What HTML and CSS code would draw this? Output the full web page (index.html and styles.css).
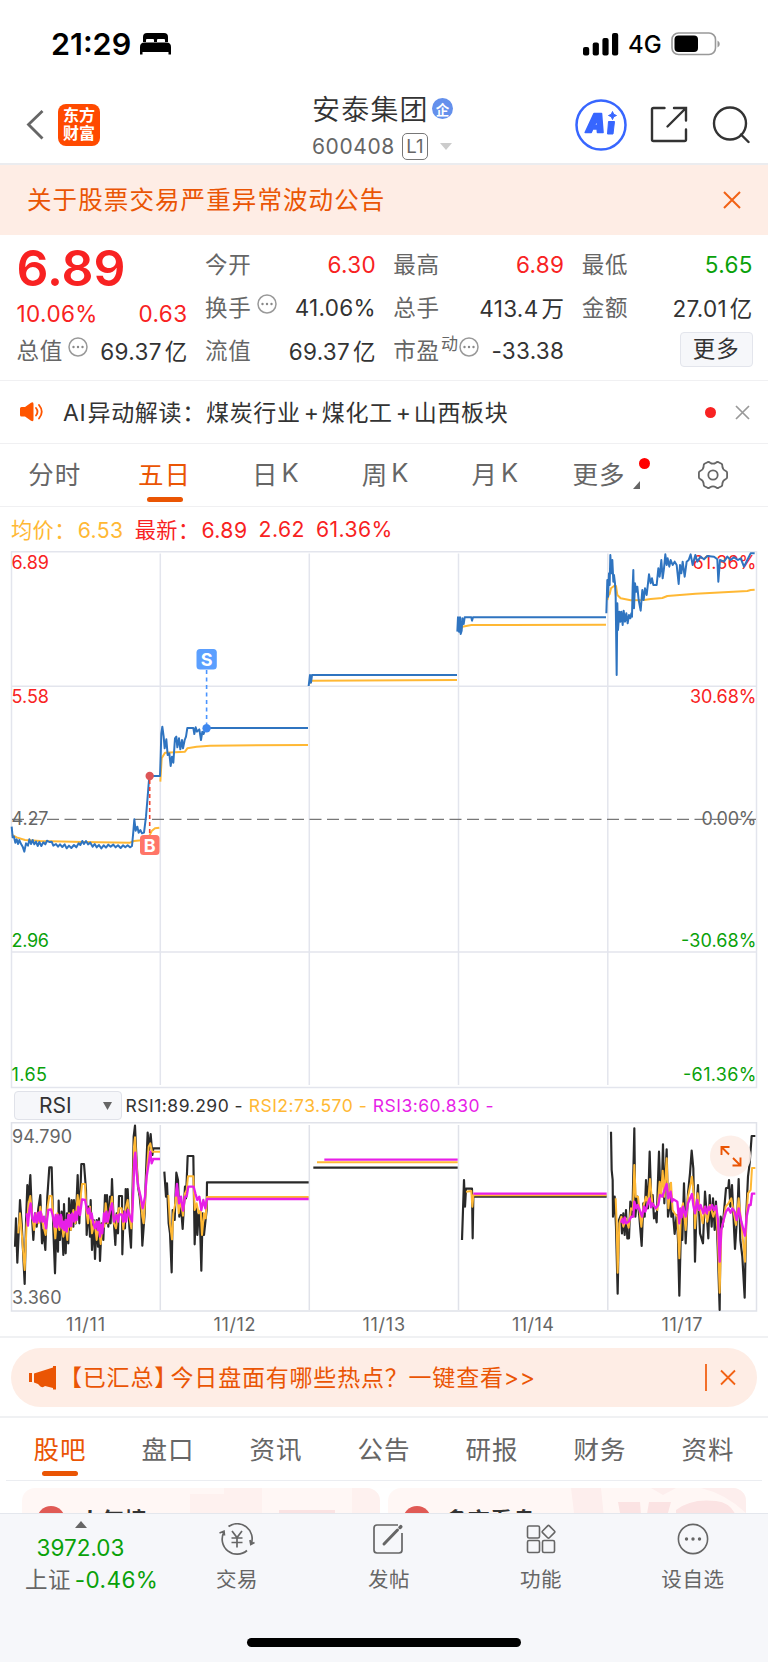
FILE: index.html
```html
<!DOCTYPE html>
<html lang="zh-CN">
<head>
<meta charset="utf-8">
<title>安泰集团 600408</title>
<link rel="stylesheet" href="styles.css">
</head>
<body>
<div class="screen">
  <div class="status">
    <span class="clock">21:29</span>
    <svg class="bed" width="32" height="22" viewBox="0 0 32 22"><path d="M3 9V4q0-4 4-4h17q4 0 4 4v5h-3V7q0-1-1-1h-6q-1 0-1 1v2h-3V7q0-1-1-1H7Q6 6 6 7v2z"/><path d="M0 21.5V14q0-4.500 4.500-4.500h22q4.500 0 4.500 4.500v7.500h-2.500V19h-26v2.500z"/></svg>
    <svg class="signal" width="36" height="23" viewBox="0 0 36 23"><rect x="0" y="14" width="6.200" height="8.500" rx="2"/><rect x="9.700" y="9.500" width="6.200" height="13" rx="2"/><rect x="19.400" y="5" width="6.200" height="17.500" rx="2"/><rect x="29" y="0" width="6.200" height="22.500" rx="2"/></svg>
    <span class="net">4G</span>
    <svg class="battery" width="50" height="24" viewBox="0 0 50 24"><rect x="1" y="1" width="43.500" height="21.500" rx="6.500" fill="none" stroke="#999" stroke-width="1.600"/><rect x="3.500" y="3.500" width="23.500" height="16.500" rx="4"/><path d="M46.500 8.500v7q2.300-1 2.300-3.500t-2.300-3.500z" fill="#999"/></svg>
  </div>

  <header class="header">
    <div class="brand">
      <svg width="19" height="32" viewBox="0 0 19 32"><path d="M16.500 2 2.500 15.500 16.500 29.500" fill="none" stroke="#666" stroke-width="2.800"/></svg>
      <div class="logo"><span>东方</span><span>财富</span></div>
    </div>
    <div class="title">
      <div class="name">安泰集团<span class="corp">企</span></div>
      <div class="code"><span>600408</span><span class="level">L1</span><svg width="12" height="7" viewBox="0 0 12 7"><path d="M0 0h12L6 7z" fill="#ccc"/></svg></div>
    </div>
    <div class="actions">
      <svg width="52" height="52" viewBox="0 0 52 52"><circle cx="26" cy="26" r="24.500" fill="none" stroke="#3766ff" stroke-width="2.500"/><path d="M19 14.500h7.500l1.500 19h-5.500l-.3-3.500h-4.500l-1.500 3.500h-6zM22 20.500l-2.500 6h3z" fill="#3766ff" fill-rule="evenodd" stroke="#3766ff" stroke-width="1.600" stroke-linejoin="round"/><path d="M33.500 22.500h6l-1.500 12.500h-5.500zM37.500 12.500l1.200 2.800 2.800 1.200-2.800 1.200-1.200 2.800-1.200-2.800-2.800-1.200 2.800-1.200z" fill="#3766ff" stroke="#3766ff" stroke-linejoin="round"/></svg>
      <svg width="38" height="38" viewBox="0 0 38 38" fill="none" stroke="#333" stroke-width="2.400" stroke-linecap="round"><path d="M14.500 2H3.500Q2 2 2 3.500v30Q2 35 3.500 35h31q1.500 0 1.500-1.500V23.500M24 2h12v12.500M36 2 17.500 20.500"/></svg>
      <svg width="38" height="38" viewBox="0 0 38 38" fill="none" stroke="#333" stroke-width="2.400" stroke-linecap="round"><circle cx="18" cy="17.500" r="16"/><path d="m29 28.500 7.500 7.500"/></svg>
    </div>
  </header>

  <div class="notice">
    <span>关于股票交易严重异常波动公告</span>
    <svg width="18" height="18" viewBox="0 0 18 18"><path d="m1 1 16 16M17 1 1 17" stroke="#f26215" stroke-width="2"/></svg>
  </div>

  <section class="quote">
    <div class="col first">
      <div class="price">6.89</div>
      <div class="row change red"><span>10.06%</span><span>0.63</span></div>
      <div class="row"><label>总值</label><svg class="info" viewBox="0 0 20 20"><use href="#dots"/></svg><b>69.37<i>亿</i></b></div>
    </div>
    <div class="col">
      <div class="row"><label>今开</label><b class="red">6.30</b></div>
      <div class="row"><label>换手</label><svg class="info" viewBox="0 0 20 20"><use href="#dots"/></svg><b>41.06%</b></div>
      <div class="row"><label>流值</label><b>69.37<i>亿</i></b></div>
    </div>
    <div class="col">
      <div class="row"><label>最高</label><b class="red">6.89</b></div>
      <div class="row"><label>总手</label><b>413.4<i>万</i></b></div>
      <div class="row"><label>市盈</label><small>动</small><svg class="info tight" viewBox="0 0 20 20"><g id="dots"><circle cx="10" cy="10" r="9" fill="none" stroke="#999" stroke-width="1.500"/><g fill="#888"><circle cx="5.500" cy="10" r="1.200"/><circle cx="10" cy="10" r="1.200"/><circle cx="14.500" cy="10" r="1.200"/></g></g></svg><b>-33.38</b></div>
    </div>
    <div class="col">
      <div class="row"><label>最低</label><b class="green">5.65</b></div>
      <div class="row"><label>金额</label><b>27.01<i>亿</i></b></div>
      <div class="row end"><span class="more">更多</span></div>
    </div>
  </section>

  <div class="alert">
    <svg width="23" height="20" viewBox="0 0 23 20"><path d="M0 6.500q0-1.500 1.500-1.500H5L11 .8Q13.500-.6 13.500 2v15.500q0 2.600-2.500 1.200L5 14.500H1.500Q0 14.500 0 13z" fill="#ff5500"/><path d="M16 6q3 3.700 0 7.500M19 3q5.500 6.700 0 13.500" fill="none" stroke="#ff5500" stroke-width="1.800" stroke-linecap="round"/></svg>
    <span class="alert-text"><span class="lat">AI</span>异动解读：煤炭行业<span class="plus">+</span>煤化工<span class="plus">+</span>山西板块</span>
    <span class="dot"></span>
    <svg width="15" height="15" viewBox="0 0 15 15"><path d="m1 1 13 13M14 1 1 14" stroke="#999" stroke-width="1.700"/></svg>
  </div>

  <nav class="periods">
    <span>分时</span><span class="on">五日</span><span>日<em>K</em></span><span>周<em>K</em></span><span>月<em>K</em></span>
    <span class="morep">更多<svg width="7" height="8" viewBox="0 0 7 8"><path d="M7 0v8H0z" fill="#666"/></svg><u class="badge"></u></span>
    <span class="gear"><svg width="30" height="28" viewBox="0 0 30 28" fill="none" stroke="#666" stroke-width="1.800" stroke-linejoin="round"><path d="M9.500 1.200Q11 .6 12 1.700q3 2 6 0 1-1.100 2.500-.5l3 1.600q1 .7.8 2.200.2 3.500 3.500 5 1.300.7 1.300 1.700v4.600q0 1-1.300 1.700-3.300 1.500-3.500 5 .2 1.500-.8 2.200l-3 1.600q-1.500.6-2.500-.5-3-2-6 0-1 1.100-2.500.5l-3-1.600q-1-.7-.8-2.200-.2-3.500-3.500-5Q.9 17.300.9 16.300v-4.600q0-1 1.300-1.700 3.300-1.500 3.500-5-.2-1.500.8-2.200z"/><circle cx="15" cy="14" r="4.700"/></svg></span>
  </nav>

  <div class="legend"><span class="gold">均价：<em>6.53</em></span><span class="red">最新：<em>6.89</em></span><span class="red">2.62</span><span class="red">61.36%</span></div>

  <svg class="chart" width="768" height="538" viewBox="0 551 768 538">
    <g stroke="#e3e5ed" stroke-width="1.500" fill="none">
      <path d="M11.500 551.700H756.500V1087.500H11.500z"/>
      <path d="M11.500 686.300H756.500M11.500 952H756.500M160.300 553.500V1085M309.300 553.500V1085M458.500 553.500V1085M607.800 553.500V1085"/>
    </g>
    <path d="M12 819.400H756" stroke="#777" stroke-width="1.200" stroke-dasharray="12 5.500" fill="none"/>
    <g class="axis">
      <text x="11.500" y="569" textLength="37.500" class="r">6.89</text>
      <text x="11.500" y="702.700" textLength="37.500" class="r">5.58</text>
      <text x="11.500" y="825" textLength="37" class="g">4.27</text>
      <text x="11.500" y="946.500" textLength="37.500" class="n">2.96</text>
      <text x="11.500" y="1080.500" textLength="35.500" class="n">1.65</text>
      <text x="692.500" y="569" textLength="64" class="r">61.36%</text>
      <text x="690" y="702.700" textLength="66.500" class="r">30.68%</text>
      <text x="701.500" y="825" textLength="55" class="g">0.00%</text>
      <text x="681" y="946.500" textLength="75.500" class="n">-30.68%</text>
      <text x="683" y="1080.500" textLength="73.500" class="n">-61.36%</text>
    </g>
    <g class="lines" transform="translate(0 640) scale(.33333)">
      <path class="y" d="M36 585 50 592 75 600 120 603 250 606 390 608 402 603 432 600 447 590 455 573 465 565 478 563M481 425 485 355 495 338 555 335 562 325 590 320 630 317 924 315M929 130 935 122 1371 120"/>
      <path class="b" d="M35 560 38 592 42 590 46 608 50 598 54 612 58 600 62 610 68 620 73 635 78 610 84 617 88 598 93 612 98 600 103 613 108 605 113 618 118 606 124 618 130 607 136 613 141 602 148 606 155 605 160 617 168 612 174 620 180 613 187 621 194 613 200 625 207 617 214 624 222 615 229 622 236 610 241 615 247 603 252 612 258 603 264 613 271 608 278 620 284 612 290 622 297 615 304 625 311 616 318 623 325 614 332 620 340 614 347 622 354 616 362 624 369 616 376 622 383 616 390 622 396 618 400 575 403 538 407 572 412 560 416 578 421 570 426 580 432 578 438 530 443 470 447 420 450 408H480L482 350 484 280 487 260 491 290 494 325 499 298 503 345 508 340 512 378 516 350 520 368 525 295 529 290 532 322 537 295 541 328 546 300 549 325 554 300 558 290 562 264H580L583 282 587 262 591 275 598 268 603 300 607 275 611 282 616 264H924M926 138 930 105 933 128 936 105H1371"/>
    </g>
    <g class="lines" transform="translate(384 440) scale(.33333)">
      <path class="y" d="M230 570 235 560 262 555 666 554M670 480 674 465 677 462 681 445 690 438 696 438 700 465 710 475 740 481 780 480 800 477 835 474 850 468 935 461 1090 453 1100 450 1112 449"/>
      <path class="b" d="M220 575 222 532 225 575 228 532 230 582 233 572 235 535 239 552 242 532H262L264 542 267 532H666M667 520 670 420 672 470 675 400 677 435 679 345 682 400 685 360 688 425 690 405 693 430 695 470 698 705 700 490 702 570 706 515 709 545 712 515 716 555 719 512 723 545 727 520 731 550 735 525 739 535 742 520 744 530 746 440 748 390 750 505 753 430 757 455 760 440 764 480 770 512 775 450 779 480 783 445 788 465 792 430 795 403 800 430 804 415 808 435H818L823 385 827 410 832 360 836 415 840 385 844 343 848 375 851 355 856 380 860 360 866 375 872 365 878 375 884 432 888 375 892 400 896 365 902 410 908 365 914 360 920 343 926 375 934 345 940 365 950 350 960 358 970 348 990 350 1000 358 1003 425 1008 360 1020 365 1030 350 1040 360 1050 352 1062 360 1070 355 1080 380 1090 360 1100 340H1112"/>
    </g>
    <path d="M149.700 780V836" stroke="#f4452f" stroke-width="1.600" stroke-dasharray="4 3"/>
    <path d="M206.600 670V724" stroke="#4a94ff" stroke-width="1.600" stroke-dasharray="4 3.500"/>
    <circle cx="149.700" cy="776" r="4.200" fill="#dd5557"/><circle cx="206.600" cy="728.300" r="4.200" fill="#3e87ee"/>
    <rect x="140" y="835" width="19.500" height="20" rx="3.500" fill="#ff7567"/><rect x="196.500" y="649" width="20.300" height="20.500" rx="3.500" fill="#5b9fff"/>
    <text x="149.700" y="851.700" class="mark">B</text><text x="206.600" y="666" class="mark">S</text>
  </svg>

  <div class="rsi-bar">
    <span class="select">RSI<svg width="9" height="8" viewBox="0 0 9 8"><path d="M0 0h9L4.500 8z" fill="#666"/></svg></span>
    <span>RSI1:89.290 -</span><span class="gold">RSI2:73.570 -</span><span class="pink">RSI3:60.830 -</span>
  </div>

  <svg class="chart rsi" width="768" height="214" viewBox="0 1122 768 214">
    <path d="M11.500 1122.700H756.500V1311H11.500zM160.300 1125V1310M309.300 1125V1310M458.500 1125V1310M607.800 1125V1310" stroke="#e0e2e9" stroke-width="1.500" fill="none"/>
    <g class="lines" transform="translate(0 1080) scale(.33333)">
      <path class="k" d="M45 500 48 415 52 548 56 460 60 360 65 430 74 612 78 430 82 315 86 360 91 285 96 410 100 480 105 400 110 440 115 385 121 345 126 490 130 450 136 510 142 350 148 262H155L160 450 165 580 170 410 174 515 176 362 180 480 185 395 190 525 192 372 197 520 201 400 205 490 207 355 212 450 215 360 220 440 222 360 227 430 233 285 238 430 244 252H252L258 330 260 465 265 380 270 470 272 360 276 510 281 420 285 537 290 420 294 500 297 415 300 543 305 430 310 480 315 345 318 430 321 345 325 440 330 350 332 430 336 297 340 400 346 495 350 400 354 460 357 348H366L367 523 371 395 375 445 377 327 381 400 383 327 388 440 393 503 398 320 401 170 405 137 410 250 414 320 419 350 424 400 427 497 434 400 438 280 443 158 447 210 452 162 457 225 460 205H480M493 275 498 350 501 310 506 430 510 460 515 577 518 390 524 420 529 278 534 300 538 410 543 380 548 447 555 320 558 355 563 228H580L584 493 588 380 592 465 596 400 600 430 604 572 608 400 612 465 620 390 621 307H926M940 263H1373"/>
      <path class="y" d="M55 460 60 400 66 470 74 570 80 430 86 370 91 348 97 410 102 450 110 400 116 430 121 380 128 430 137 465 143 380 148 348H155L160 410 166 475 172 400 178 450 184 410 190 470 196 430 202 480 207 400 213 450 220 390 226 430 233 345 238 390 246 312H255L259 390 264 430 270 380 276 460 284 425 290 480 296 430 302 492 308 430 313 440 317 370 323 430 330 390 336 350 342 430 348 445 356 385H365L370 448 376 390 383 360 388 410 394 445 399 330 402 200 405 172 410 260 415 320 421 350 427 410 431 430 437 330 441 270 446 200 451 190 456 215H480M505 345 510 430 516 478 520 400 526 370 531 320 536 400 542 360 549 407 555 340 560 330 564 289H580L584 390 590 370 596 400 602 390 606 465 612 400 617 415 621 351H926M951 247H1373"/>
      <path class="m" d="M80 400 84 437 88 390 92 370 97 415 102 425 106 400 110 428 115 398 119 425 122 395 128 425 132 410 138 445 145 390 153 388 158 405 164 440 167 405 171 442 175 405 180 440 183 405 187 445 190 425 193 450 197 420 200 455 205 405 208 440 211 405 214 438 217 400 223 425 226 395 230 420 235 380 240 405 246 358 255 360 260 385 264 400 268 385 272 415 275 400 280 430 285 445 290 425 294 450 297 425 300 470 303 435 307 460 312 400 316 425 319 395 323 425 328 400 336 370 342 425 350 405 354 425 358 403 365 403 370 425 374 395 378 425 384 390 390 410 396 425 400 330 403 240 406 218 410 280 415 320 422 350 428 385 435 350 440 290 446 250 451 215 455 250 460 237H480M527 350 531 312 537 370 543 350 549 392 555 350 560 350 565 320H581L586 340 592 360 598 350 604 390 610 360 616 385 621 357H926M973 239H1373"/>
    </g>
    <g class="lines" transform="translate(384 1080) scale(.33333)">
      <path class="k" d="M234 480 240 300 243 380 246 326H264L266 475 268 350H668M681 155 683 270 686 300 687 410 692 350 696 440 701 641 705 420 711 405 714 460 718 400 722 465 726 390 730 475H735L739 365 745 410 751 145 754 410 760 350 766 410 773 498 778 370 782 410 786 300 792 385 797 215 802 370 806 345 810 415 814 400 818 427 822 300 825 215 829 330 831 300 834 300 837 193 841 370 844 290 848 208 852 410 858 370 860 310 862 410 867 400 872 462 878 405 882 480 886 647 892 400 895 480 900 310 905 490 912 340 918 280 923 212 928 265 933 545 938 370 942 315 948 460 957 490 963 335 968 400 973 475 977 345 983 440 987 355 992 450 996 365 1001 500 1007 690 1010 410 1016 440 1020 395 1026 325 1033 323 1035 300 1039 380 1044 315 1048 400 1053 507 1060 400 1064 297 1069 480 1075 530 1082 653 1087 400 1092 290 1097 250 1103 168H1114"/>
      <path class="y" d="M246 335 262 333 265 380 268 346H668M695 355 698 430 701 578 706 430 712 410 718 440 726 415 734 443 741 385 747 390 751 255 755 350 762 350 772 440 778 380 786 350 792 370 798 297 805 370 812 380 820 390 827 305 831 350 836 272 841 350 848 235 853 385 861 308 866 390 872 400 880 410 886 535 891 395 897 370 905 450 912 350 924 290 930 350 933 445 941 340 948 390 956 430 962 380 970 425 978 375 988 410 996 380 1002 480 1007 638 1012 450 1019 420 1025 380 1032 372 1042 355 1048 390 1056 435 1064 355 1072 430 1083 545 1087 420 1092 340 1100 330 1104 264H1114"/>
      <path class="m" d="M268 341H668M711 428 715 418 718 430 722 412 726 430 734 425 742 410 748 410 751 365 757 385 761 375 765 385 774 410 780 380 784 395 790 375 797 355 801 382 805 370 815 385 823 375 828 345 835 350 840 335 848 312 853 355 860 335 864 365 868 358 880 365 886 430 889 385 893 412 897 380 905 410 912 370 924 342 928 375 933 400 940 360 945 390 950 375 958 400 964 380 968 400 974 380 978 390 984 375 990 390 996 378 1002 420 1007 545 1012 450 1019 420 1026 395 1033 385 1040 398 1045 385 1052 395 1058 420 1064 385 1072 425 1083 467 1088 410 1095 375 1100 375 1104 341H1114"/>
    </g>
    <circle cx="730.500" cy="1156" r="20.500" fill="#fdeee7" fill-opacity=".92"/>
    <path d="M721.500 1155V1147H729.500M722 1147.500 729 1154.500M740.500 1157.500V1165.500H732.500M740 1165 733 1158" fill="none" stroke="#ea5504" stroke-width="1.900"/>
    <g class="axis g">
      <text x="12" y="1142.700" textLength="60">94.790</text>
      <text x="12" y="1304" textLength="49.500">3.360</text>
      <text x="66" y="1331" textLength="39">11/11</text><text x="213.500" y="1331" textLength="42">11/12</text><text x="362.500" y="1331" textLength="42.500">11/13</text><text x="512" y="1331" textLength="42">11/14</text><text x="661.500" y="1331" textLength="41">11/17</text>
    </g>
  </svg>

  <div class="promo-wrap">
    <div class="promo">
      <svg width="28" height="24" viewBox="0 0 28 24" fill="#ea5504"><path d="M0 7h3v9H0zM5 7.500 24 1.500V0h3v23.500h-3V22l-8-2q-2 2-4.500.5L9 18l-4-1.500z"/></svg>
      <span class="promo-text"><span class="lb">【</span>已汇总<span class="rb">】</span>今日盘面有哪些热点？一键查看<span class="lat">&gt;&gt;</span></span>
      <svg width="31" height="27" viewBox="0 0 31 27"><path d="M1 0v27M16 6.500l14 14M30 6.500l-14 14" stroke="#f26215" stroke-width="1.800"/></svg>
    </div>
  </div>

  <nav class="sections"><span class="on">股吧</span><span>盘口</span><span>资讯</span><span>公告</span><span>研报</span><span>财务</span><span>资料</span></nav>

  <div class="cards">
    <div class="card"><i class="ball"></i><strong>人气榜</strong><svg width="190" height="50" viewBox="0 0 190 50" fill="#fef1ef"><path d="M0 6h34V0h38v50H0zM162 0h28v50h-28z"/><path d="M89 22h56v28H89z" fill="#fae3e3"/></svg></div>
    <div class="card"><i class="ball"></i><strong>多空看盘</strong><svg width="175" height="50" viewBox="0 0 175 50" fill="#fdeeed"><path d="M0 0h30l5 50H6zM80 0h25l-13 7z"/><path d="M47 14h22l3 38H54zM78 14h22l-10 36H72zM105 22q15-12 40-9t22 37h-62z" fill="#fbe3e3"/><path d="M130 0h45v25Q155 6 130 0z"/></svg></div>
  </div>

  <footer class="dock">
    <div class="index">
      <svg width="12" height="7" viewBox="0 0 12 7"><path d="M0 7h12L6 0z" fill="#666"/></svg>
      <div class="green points">3972.03</div>
      <div class="pct">上证<span class="green">-0.46%</span></div>
    </div>
    <div class="item"><svg width="36" height="33" viewBox="0 1 36 33" fill="none" stroke="#666" stroke-width="1.700"><path d="M9.500 4.500A15 15 0 0 1 32.200 22M5 10A15 15 0 0 0 28 28.500M.5 11 5 9.300 5.500 13.500M35.500 20.500 31.800 22.500 31 18M13 9l5 6.500L23 9M12.500 16h11M12.500 20.500h11M18 15.500V25.500"/></svg><span>交易</span></div>
    <div class="item"><svg width="34" height="33" viewBox="0 0 34 33" fill="none" stroke="#666" stroke-width="1.700"><path d="M26 2H5Q2 2 2 5v22q0 3 3 3h22q3 0 3-3V10"/><path d="m12 21 13.500-14" stroke-width="3" stroke-linecap="round"/><path d="m28 4.500.8-.8" stroke-width="3.500" stroke-linecap="round"/></svg><span>发帖</span></div>
    <div class="item"><svg width="30" height="33" viewBox="0 0 30 33" fill="none" stroke="#666" stroke-width="1.600"><rect x="1.500" y="3" width="12" height="12" rx="1.500"/><rect x="1.500" y="17.500" width="12" height="12" rx="1.500"/><rect x="16.500" y="17.500" width="12" height="12" rx="1.500"/><rect x="17.700" y="4" width="9.600" height="9.600" rx="1.200" transform="rotate(45 22.500 8.800)"/></svg><span>功能</span></div>
    <div class="item"><svg width="32" height="33" viewBox="0 0 32 33"><circle cx="16" cy="16" r="14.600" fill="none" stroke="#666" stroke-width="1.600"/><g fill="#666"><circle cx="9.500" cy="16" r="1.700"/><circle cx="16" cy="16" r="1.700"/><circle cx="22.500" cy="16" r="1.700"/></g></svg><span>设自选</span></div>
    <div class="home"></div>
  </footer>
</div>
</body>
</html>
```

FILE: styles.css
```css
* { box-sizing: border-box; }
body { margin: 0; background: #fff; font-family: Inter, "Noto Sans CJK SC", sans-serif; color: #333; font-weight: 400; }
svg { display: block; flex: none; }
em, i, b { font-style: normal; font-weight: inherit; }
.screen { width: 768px; height: 1662px; overflow: hidden; display: flex; flex-direction: column; }
.screen > * { flex: none; }
.red { color: #f82222; }
.green { color: #09a109; }
.gold { color: #ffb834; }
.pink { color: #e71fe7; }

.status { height: 88px; display: flex; align-items: center; padding: 0 47px 0 51px; color: #000; }
.clock { font-size: 30.500px; font-weight: 600; width: 89px; white-space: nowrap; letter-spacing: 0; padding-bottom: 1px; }
.bed { margin-right: auto; }
.signal { margin-right: 9px; }
.net { font-size: 24px; font-weight: 500; width: 43px; letter-spacing: 0; }

.header { height: 77px; display: grid; grid-template-columns: 286px 1fr 192px; padding: 0 0 0 26px; border-bottom: 2px solid #ebecef; }
.brand { display: flex; align-items: center; gap: 13px; padding-bottom: 4px; }
.logo { width: 42px; height: 42px; border-radius: 8px; background: #ff4a00; color: #fff; font-size: 16px; font-weight: 700; line-height: 18px; display: flex; flex-direction: column; align-items: center; justify-content: center; padding-bottom: 2px; }
.name { display: flex; align-items: center; height: 39px; font-size: 28px; letter-spacing: 1.200px; font-weight: 350; white-space: nowrap; }
.corp { width: 21.500px; height: 21.500px; border-radius: 50%; margin: 2px 0 0 3px; background: #6490ec; color: #fff; font-size: 13.500px; font-weight: 700; letter-spacing: 0; display: grid; place-items: center; }
.code { display: flex; align-items: center; height: 38px; font-size: 21px; color: #666; letter-spacing: .6px; }
.level { border: 1.500px solid #777; border-radius: 5px; width: 26px; height: 27px; font-size: 18.500px; letter-spacing: 0; margin: 0 12px 0 7px; display: grid; place-items: center; line-height: 1; }
.actions { display: flex; align-items: center; gap: 24px; padding-bottom: 4px; margin-left: -1px; }
.actions svg:first-child { margin-right: -1px; }

.notice { height: 70px; background: #feede5; display: flex; align-items: center; justify-content: space-between; padding: 0 27px 0 27px; color: #ea5504; font-size: 24.500px; letter-spacing: 1.100px; }
.notice span { padding-bottom: 3px; }

.quote { height: 146px; border-bottom: 1.500px solid #f0f0f2; padding: 8px 15px 0 16.500px; display: grid; grid-template-columns: repeat(4, 171px); column-gap: 17.400px; font-size: 22.500px; }
.row { height: 43px; display: flex; align-items: center; white-space: nowrap; letter-spacing: .3px; }
.row label { color: #666; letter-spacing: .8px; margin-top: -3px; }
.row b { margin: -1px 0 0 auto; }
.row b i { margin-left: 3px; }
.row small { font-size: 17px; color: #666; margin: -16px 0 0 1px; }
.info { width: 20px; height: 20px; margin: -8px 0 0 5px; }
.info.tight { margin-left: 1px; }
.price { height: 55px; line-height: 51px; font-size: 50px; font-weight: 600; color: #f82222; }
.row.change { height: 31px; justify-content: space-between; letter-spacing: .4px; }
.end { justify-content: flex-end; }
.more { width: 73px; height: 35px; margin-top: -3px; border: 1.500px solid #e3e5ec; border-radius: 4px; background: #f6f7fa; color: #333; display: grid; place-items: center; line-height: 1; letter-spacing: .8px; }

.alert { height: 63px; border-bottom: 1.500px solid #f0f0f2; display: flex; align-items: center; padding: 0 18px 0 20px; font-size: 23px; }
.alert-text { margin-left: 20px; flex: 1; letter-spacing: .7px; white-space: nowrap; padding-bottom: 3px; }
.alert-text .lat { margin-right: 1px; }
.plus { margin: 0 2px 0 3px; }
.dot { width: 11px; height: 11px; border-radius: 50%; background: #f82222; margin-right: 19px; }

.periods { height: 63px; border-bottom: 1.500px solid #f0f0f2; display: grid; grid-template-columns: repeat(7, 1fr); font-size: 25.500px; color: #666; }
.periods > span { display: flex; align-items: center; justify-content: center; letter-spacing: 1px; position: relative; padding: 0 0 5px; }
.periods em { margin: 0 -3px 0 3px; }
.periods .on, .sections .on { color: #ea5504; }
.on::after { content: ""; position: absolute; left: 50%; margin-left: -18px; width: 36px; height: 5.500px; border-radius: 3px; background: #ea5504; bottom: 4px; }
.periods .morep { padding-left: 6px; }
.periods .gear { padding: 0; }
.morep svg { margin: 24px 0 0 8px; }
.badge { position: absolute; width: 11px; height: 11px; border-radius: 50%; background: #f00; left: 90px; top: 14px; }

.legend { height: 44px; display: flex; align-items: center; gap: 11.200px; padding: 0 0 1px 11px; font-size: 21.200px; letter-spacing: .4px; white-space: nowrap; }
.legend em { margin-left: 2px; }
.axis { font-size: 18px; }
.r { fill: #f82222; } .g { fill: #666; } .n { fill: #09a109; }
.lines path { fill: none; stroke-width: 6px; stroke-linejoin: round; }
.rsi .lines .k { stroke-width: 6.500px; }
.rsi .lines .m { stroke-width: 7px; }
.lines .b { stroke: #2f74c0; } .lines .y { stroke: #ffb834; } .lines .k { stroke: #292929; } .lines .m { stroke: #e71fe7; }
.mark { fill: #fff; font-size: 18px; font-weight: 700; text-anchor: middle; }

.rsi-bar { height: 33px; display: flex; align-items: center; padding-left: 14px; gap: 5.500px; font-size: 17.500px; letter-spacing: .5px; white-space: nowrap; }
.select { width: 108px; height: 29px; border: 1.500px solid #e0e2e9; border-radius: 4px; background: #f6f7fa; display: flex; align-items: center; justify-content: space-between; padding: 0 9px 0 24px; font-size: 21px; letter-spacing: 0; margin-right: -2px; }

.promo-wrap { border-top: 2px solid #f0f1f3; border-bottom: 2px solid #f0f1f3; height: 82px; padding: 10px 11px 0; }
.promo { height: 59px; border-radius: 30px; background: #feede5; color: #ea5504; display: flex; align-items: center; padding: 0 21px 0 18px; font-size: 23px; }
.promo-text { flex: 1; letter-spacing: .8px; white-space: nowrap; padding-bottom: 3px; }
.lb { margin-left: 2px; }
.rb { font-feature-settings: "halt"; margin-right: 4px; }

.sections { height: 63px; margin: 0 6px; border-bottom: 1.500px solid #ebedf1; display: grid; grid-template-columns: repeat(7, 1fr); font-size: 25.500px; color: #666; }
.sections > span { display: flex; align-items: center; justify-content: center; letter-spacing: 1px; position: relative; padding: 0 0 4px; }

.cards { height: 32px; padding: 7px 22px 0; display: grid; grid-template-columns: 1fr 1fr; gap: 8px; overflow: hidden; }
.card { height: 60px; border-radius: 13px; background: #fff7f5; display: flex; align-items: flex-start; overflow: hidden; }
.card svg { margin-left: auto; }
.ball { width: 28px; height: 28px; border-radius: 50%; background: #e05a55; margin: 17.500px 14px 0 15px; }
.card strong { font-size: 22.500px; line-height: 24px; margin-top: 21px; font-weight: 700; white-space: nowrap; }

.dock { height: 149px; background: #f6f7fa; border-top: 1.500px solid #e4e7ed; display: grid; grid-template-columns: 161px repeat(4, 152px); grid-template-rows: 124px 9px; }
.index { display: flex; flex-direction: column; font-size: 22.500px; white-space: nowrap; }
.index svg { margin: 7px 0 0 75px; }
.points { text-align: center; line-height: 30px; margin-top: 5px; }
.pct { margin: 1px 0 0 25px; line-height: 32px; color: #666; letter-spacing: .4px; }
.pct .green { margin-left: 4px; }
.item { display: flex; flex-direction: column; align-items: center; color: #666; font-size: 20.500px; padding-top: 9px; letter-spacing: .6px; }
.item span { line-height: 30px; margin-top: 9px; }
.home { grid-column: 1 / -1; justify-self: start; margin-left: 247px; width: 274px; height: 9px; border-radius: 5px; background: #000; }
```
